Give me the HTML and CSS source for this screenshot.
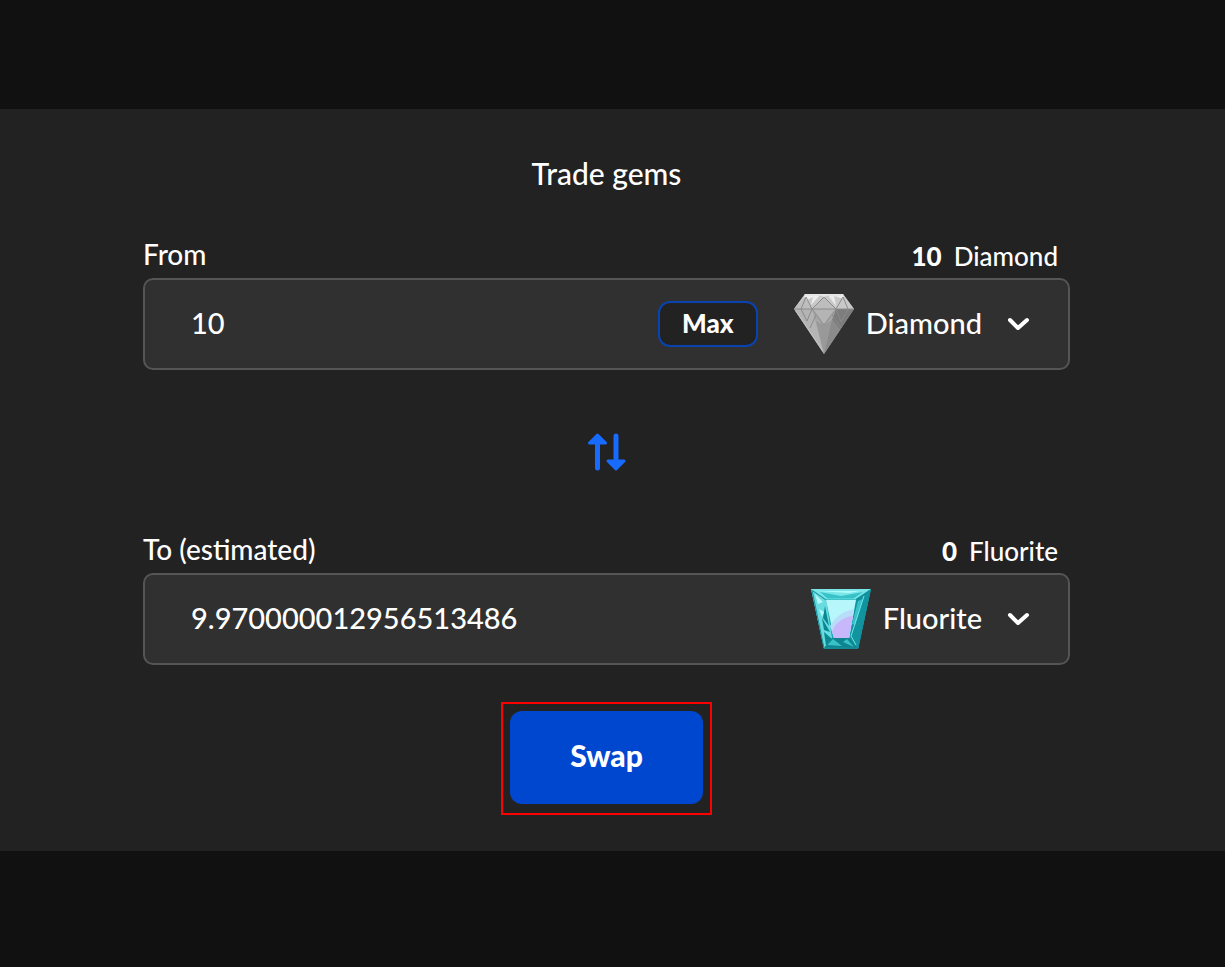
FILE: index.html
```html
<!DOCTYPE html>
<html lang="en">
<head>
<meta charset="utf-8">
<meta name="viewport" content="width=device-width, initial-scale=1">
<title>Trade gems</title>
<link rel="stylesheet" href="styles.css">
</head>
<body>
<main class="panel">
  <h1 class="title">Trade gems</h1>
  <form class="trade">
    <div class="labels">
      <label class="label" for="from-amount">From</label>
      <p class="balance"><strong>10</strong> <span>Diamond</span></p>
    </div>
    <div class="field">
      <input class="amount" id="from-amount" type="text" inputmode="decimal" value="10">
      <button class="max" type="button">Max</button>
      <div class="token">
        <svg class="gem" viewBox="0 0 60 60" aria-hidden="true">
          <path fill="#a7a7a7" d="M11 0H49L60 15 30 60 0 15Z"/>
          <path fill="#c9c9c9" d="M11 0H49L60 15H0Z"/>
          <path fill="#ececec" d="M11 0 9 8 19 3 17 11 26 1 30 3 34 1 42 12 40 2 50 5 49 0Z"/>
          <path fill="#bdbdbd" d="M30 3 42 15H18ZM0 15 11 3 18 15Z"/>
          <path fill="#b4b4b4" d="M0 15H18L30 60Z"/>
          <path fill="#b4b4b4" d="M18 15H42L30 31Z"/>
          <path fill="#999" d="M30 31 22 27 30 60 38 26Z"/>
          <path fill="#7d7d7d" d="M42 15H60L46 36 38 26Z"/>
          <path fill="#8b8b8b" d="M38 26 46 36 30 60Z"/>
          <path fill="none" stroke="#8b8b8b" d="M0 15H60M7 15 12 3 18 15 30 3 42 15 49 3 54 15M18 15 30 31 42 15M7 15 13 27 18 15M54 15 47 28 42 15M22 21 16 34M38 21 47 34"/>
          <path fill="none" stroke="#dedede" d="M12 1H48"/>
          <path fill="none" stroke="#c4c4c4" d="M2 17 29 57"/>
        </svg>
        <div class="picker">
          <select class="select" aria-label="From gem"><option selected>Diamond</option><option>Fluorite</option></select>
          <svg class="chevron" viewBox="0 0 24 16" aria-hidden="true"><path d="M4 4 12 12 21 4"/></svg>
        </div>
      </div>
    </div>

    <button class="flip" type="button" aria-label="Switch direction">
      <svg class="flip-icon" viewBox="0 0 38 38" aria-hidden="true">
        <path stroke-width="5" d="M9.500 9V35M28 3V29"/>
        <path class="heads" stroke-width="3" d="M9.500 2 17.500 10H1.500ZM28 36 36 28H20Z"/>
      </svg>
    </button>

    <div class="labels">
      <label class="label" for="to-amount">To (estimated)</label>
      <p class="balance"><strong>0</strong> <span>Fluorite</span></p>
    </div>
    <div class="field">
      <input class="amount" id="to-amount" type="text" inputmode="decimal" value="9.970000012956513486">
      <div class="token">
        <svg class="gem" viewBox="0 0 60 60" aria-hidden="true">
          <path fill="#15a5ae" d="M0 0H60L47 60H13Z"/>
          <path fill="#68dce0" d="M0 0 15 10 21 49 13 60Z"/>
          <path fill="#7be6e8" d="M0 0H60L45 10H15Z"/>
          <path fill="#10949f" d="M60 0 45 10 39 49 47 60Z"/>
          <path fill="#0e8490" d="M21 49H39L47 60H13Z"/>
          <path fill="#38c2c8" d="M9 3 30 7 52 3 42 10H17ZM52 10 44 36 41 35 47 12ZM16 56 22 50 31 57ZM36 50 43 58 32 53Z"/>
          <path fill="#0b8790" d="M14 17 18 37 12 29ZM11 29 19 43 13 41ZM13 43 21 50 15 57Z"/>
          <path fill="#b5fafa" d="M4 5 12 13 7 15ZM8 20 13 23 11 28ZM6 2H49L38 4Z"/>
          <path fill="#b7f7fc" d="M15 11H45L38 49H23Z"/>
          <path fill="#b7ddf9" d="M43 20C34 22 24 27 19 37L23 49H38Z"/>
          <path fill="#c8b7fb" d="M42 27C32 28 24 34 21 43L23 49H38Z"/>
          <path fill="none" stroke="#198f9b" d="M1 1 13 59H47L59 1M2 2 15 11M58 2 45 11M38 49 46 58M22 49 14 58"/>
          <path fill="none" stroke="#71e5e6" d="M15 10H45M53 7 40 47 45 56"/>
        </svg>
        <div class="picker">
          <select class="select" aria-label="To gem"><option>Diamond</option><option selected>Fluorite</option></select>
          <svg class="chevron" viewBox="0 0 24 16" aria-hidden="true"><path d="M4 4 12 12 21 4"/></svg>
        </div>
      </div>
    </div>

    <div class="highlight"><button class="swap" type="submit">Swap</button></div>
  </form>
</main>
</body>
</html>
```
FILE: styles.css
```css
* { box-sizing: border-box; }

body {
  margin: 0;
  padding: 109px 0 116px;
  background: #111;
  color: #fff;
  font-family: Lato, "Liberation Sans", sans-serif;
  font-size: 29px;
  font-weight: 500;
}

input, button, select { font: inherit; color: inherit; }

.panel {
  padding: 44px 155px 36px 143px;
  background: #222;
}

.title {
  margin: 0 0 43px;
  font-size: 30px;
  font-weight: 500;
  line-height: 40px;
  text-align: center;
}

.trade {
  display: flex;
  flex-direction: column;
}

.labels {
  display: flex;
  align-items: center;
  justify-content: space-between;
  height: 42px;
  padding: 0 12px 2px 0;
}

.label {
  padding-bottom: 4px;
  font-size: 28px;
}

.balance {
  display: flex;
  gap: 12px;
  margin: 0;
  font-size: 26px;
}

.balance strong { font-weight: 900; }

.field {
  display: flex;
  align-items: center;
  min-height: 92px;
  padding: 0 38px 0 46px;
  border: 2px solid #555;
  border-radius: 10px;
  background: #303030;
}

.amount {
  flex: 1;
  min-width: 0;
  padding: 0 0 4px;
  border: 0;
  outline: 0;
  background: transparent;
}

.max {
  height: 46px;
  padding: 0 22px 2px;
  border: 2px solid #0843b0;
  border-radius: 12px;
  background: #222;
  font-size: 26px;
  font-weight: 900;
  line-height: 40px;
}

.token {
  display: flex;
  align-items: center;
  gap: 12px;
  margin-left: 36px;
}

.gem {
  width: 60px;
  height: 60px;
}

.picker {
  position: relative;
  display: flex;
  align-items: center;
}

.select {
  field-sizing: content;
  appearance: none;
  padding: 0 48px 4px 0;
  border: 0;
  outline: 0;
  background: transparent;
}

.chevron {
  position: absolute;
  right: 0;
  width: 24px;
  height: 16px;
  fill: none;
  stroke: #fff;
  stroke-width: 4;
  stroke-linecap: round;
  stroke-linejoin: round;
  pointer-events: none;
}

.flip {
  align-self: center;
  margin: 63px 0 60px;
  padding: 0;
  border: 0;
  background: transparent;
}

.flip-icon {
  display: block;
  width: 38px;
  height: 38px;
  fill: none;
  stroke: #186bff;
  stroke-linecap: round;
  stroke-linejoin: round;
}

.heads { fill: #186bff; }

.highlight {
  align-self: center;
  margin-top: 37px;
  padding: 7px 7px 9px;
  border: 2px solid #f00;
}

.swap {
  display: block;
  height: 93px;
  padding: 0 60px 6px;
  border: 0;
  border-radius: 12px;
  background: #0047d0;
  font-size: 30px;
  font-weight: 900;
}
```
